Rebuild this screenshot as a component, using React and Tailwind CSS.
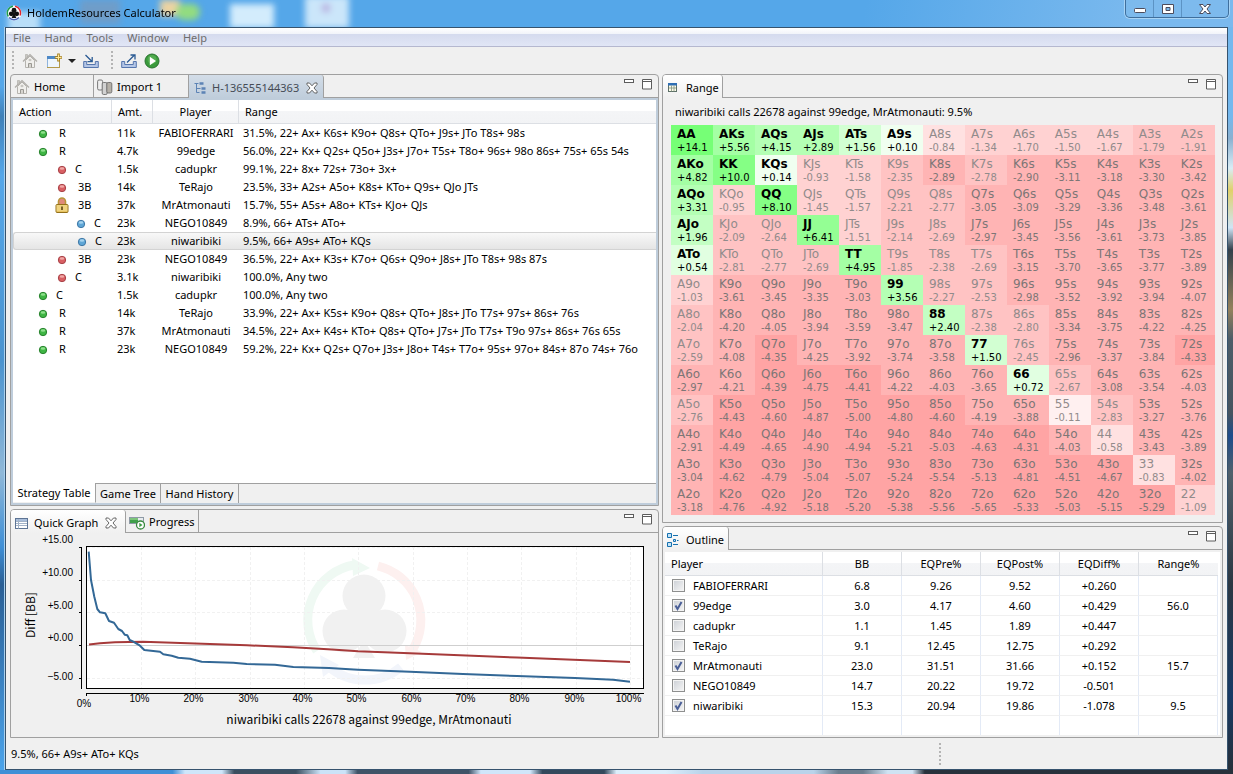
import { useState } from 'react'
import clsx from 'clsx'

const MENUS = ['File', 'Hand', 'Tools', 'Window', 'Help']

const ACTIONS = [
  { level: 1, action: 'R', amount: '11k', player: 'FABIOFERRARI', range: '31.5%, 22+ Ax+ K6s+ K9o+ Q8s+ QTo+ J9s+ JTo T8s+ 98s' },
  { level: 1, action: 'R', amount: '4.7k', player: '99edge', range: '56.0%, 22+ Kx+ Q2s+ Q5o+ J3s+ J7o+ T5s+ T8o+ 96s+ 98o 86s+ 75s+ 65s 54s' },
  { level: 2, action: 'C', amount: '1.5k', player: 'cadupkr', range: '99.1%, 22+ 8x+ 72s+ 73o+ 3x+' },
  { level: 2, action: '3B', amount: '14k', player: 'TeRajo', range: '23.5%, 33+ A2s+ A5o+ K8s+ KTo+ Q9s+ QJo JTs' },
  { level: 2, action: '3B', amount: '37k', player: 'MrAtmonauti', range: '15.7%, 55+ A5s+ A8o+ KTs+ KJo+ QJs', locked: true },
  { level: 3, action: 'C', amount: '23k', player: 'NEGO10849', range: '8.9%, 66+ ATs+ ATo+' },
  { level: 3, action: 'C', amount: '23k', player: 'niwaribiki', range: '9.5%, 66+ A9s+ ATo+ KQs' },
  { level: 2, action: '3B', amount: '23k', player: 'NEGO10849', range: '36.5%, 22+ Ax+ K3s+ K7o+ Q6s+ Q9o+ J8s+ JTo T8s+ 98s 87s' },
  { level: 2, action: 'C', amount: '3.1k', player: 'niwaribiki', range: '100.0%, Any two' },
  { level: 1, action: 'C', amount: '1.5k', player: 'cadupkr', range: '100.0%, Any two' },
  { level: 1, action: 'R', amount: '14k', player: 'TeRajo', range: '33.9%, 22+ Ax+ K5s+ K9o+ Q8s+ QTo+ J8s+ JTo T7s+ 97s+ 86s+ 76s' },
  { level: 1, action: 'R', amount: '37k', player: 'MrAtmonauti', range: '34.5%, 22+ Ax+ K4s+ KTo+ Q8s+ QTo+ J7s+ JTo T7s+ T9o 97s+ 86s+ 76s 65s' },
  { level: 1, action: 'R', amount: '23k', player: 'NEGO10849', range: '59.2%, 22+ Kx+ Q2s+ Q7o+ J3s+ J8o+ T4s+ T7o+ 95s+ 97o+ 84s+ 87o 74s+ 76o' },
]

const RANKS = 'AKQJT98765432'

const EV = [
  '+14.1 +5.56 +4.15 +2.89 +1.56 +0.10 -0.84 -1.34 -1.70 -1.50 -1.67 -1.79 -1.91',
  '+4.82 +10.0 +0.14 -0.93 -1.58 -2.35 -2.89 -2.78 -2.90 -3.11 -3.18 -3.30 -3.42',
  '+3.31 -0.95 +8.10 -1.45 -1.57 -2.21 -2.77 -3.05 -3.09 -3.29 -3.36 -3.48 -3.61',
  '+1.96 -2.09 -2.64 +6.41 -1.51 -2.14 -2.69 -2.97 -3.45 -3.56 -3.61 -3.73 -3.85',
  '+0.54 -2.81 -2.77 -2.69 +4.95 -1.85 -2.38 -2.69 -3.15 -3.70 -3.65 -3.77 -3.89',
  '-1.03 -3.61 -3.45 -3.35 -3.03 +3.56 -2.27 -2.53 -2.98 -3.52 -3.92 -3.94 -4.07',
  '-2.04 -4.20 -4.05 -3.94 -3.59 -3.47 +2.40 -2.38 -2.80 -3.34 -3.75 -4.22 -4.25',
  '-2.59 -4.08 -4.35 -4.25 -3.92 -3.74 -3.58 +1.50 -2.45 -2.96 -3.37 -3.84 -4.33',
  '-2.97 -4.21 -4.39 -4.75 -4.41 -4.22 -4.03 -3.65 +0.72 -2.67 -3.08 -3.54 -4.03',
  '-2.76 -4.43 -4.60 -4.87 -5.00 -4.80 -4.60 -4.19 -3.88 -0.11 -2.83 -3.27 -3.76',
  '-2.91 -4.49 -4.65 -4.90 -4.94 -5.21 -5.03 -4.63 -4.31 -4.03 -0.58 -3.43 -3.89',
  '-3.04 -4.62 -4.79 -5.04 -5.07 -5.24 -5.54 -5.13 -4.81 -4.51 -4.67 -0.83 -4.02',
  '-3.18 -4.76 -4.92 -5.18 -5.20 -5.38 -5.56 -5.65 -5.33 -5.03 -5.15 -5.29 -1.09',
].map((row) => row.split(' '))

const STEPS = [0.25, 0.9, 1.75, 2.85, 4.3, 6, 8, 12]
const GREENS = ['bg-[#f0fff0]', 'bg-[#e1ffe1]', 'bg-[#d2ffd2]', 'bg-[#c3ffc3]', 'bg-[#b4ffb4]', 'bg-[#a4ffa4]', 'bg-[#94ff94]', 'bg-[#85ff85]', 'bg-[#76ff76]']
const REDS = ['bg-[#fff0f0]', 'bg-[#ffe1e1]', 'bg-[#ffd2d2]', 'bg-[#ffc3c3]', 'bg-[#ffb4b4]', 'bg-[#ffa4a4]']

const SEATS = [
  { name: 'FABIOFERRARI', bb: '6.8', pre: '9.26', post: '9.52', diff: '+0.260', range: '' },
  { name: '99edge', bb: '3.0', pre: '4.17', post: '4.60', diff: '+0.429', range: '56.0' },
  { name: 'cadupkr', bb: '1.1', pre: '1.45', post: '1.89', diff: '+0.447', range: '' },
  { name: 'TeRajo', bb: '9.1', pre: '12.45', post: '12.75', diff: '+0.292', range: '' },
  { name: 'MrAtmonauti', bb: '23.0', pre: '31.51', post: '31.66', diff: '+0.152', range: '15.7' },
  { name: 'NEGO10849', bb: '14.7', pre: '20.22', post: '19.72', diff: '-0.501', range: '' },
  { name: 'niwaribiki', bb: '15.3', pre: '20.94', post: '19.86', diff: '-1.078', range: '9.5' },
]

function AppIcon() {
  return (
    <svg viewBox="0 0 16 16" className="size-4 shrink-0">
      <circle cx="8" cy="8" r="7.6" fill="#fff" />
      <g fill="none" strokeWidth="1.5">
        <path d="M2.3 11.5A6.8 6.8 0 0 1 7 1.3" stroke="#1f9d4c" />
        <path d="M9 1.3a6.8 6.8 0 0 1 5 9.2" stroke="#e0242b" />
        <path d="M13 12.6a6.8 6.8 0 0 1-10 0" stroke="#4a62b5" />
      </g>
      <g fill="#111">
        <circle cx="8" cy="5.2" r="2.4" />
        <circle cx="5.3" cy="8.8" r="2.4" />
        <circle cx="10.7" cy="8.8" r="2.4" />
        <path d="M7.2 7h1.6l.3 3 1.3 3H5.6l1.3-3z" />
      </g>
    </svg>
  )
}

function HomeIcon() {
  return (
    <svg viewBox="0 0 16 16" className="size-4 shrink-0">
      <path d="M3.5 7.5v7h9v-7L8 3z" fill="#f0efec" stroke="#b5b3ae" />
      <path d="M1 8.5 8 1.6l7 6.9" fill="none" stroke="#b0aea9" strokeWidth="1.3" />
      <path d="M3.500 1.500h2v2.500l-2 2z" fill="#c9c7c2" stroke="#a9a7a2" strokeWidth=".6" />
      <path d="M6.5 14.5v-4h3v4" fill="#d6d4cf" stroke="#9a9893" />
      <path d="M6.5 7h3M8 5.8v2.4" stroke="#b0aea9" strokeWidth=".8" />
    </svg>
  )
}

function NewIcon() {
  return (
    <svg viewBox="0 0 16 16" className="size-4">
      <rect x="1.5" y="3.5" width="12" height="11" fill="#eef6fd" stroke="#b39a4c" />
      <path d="M1 3h10v3H1z" fill="#4d88c6" />
      <path d="M1.5 14V6" stroke="#8fb4dc" />
      <path d="M12.5.5v8M8.8 4.5h7.4" stroke="#a47d1a" strokeWidth="2.6" />
      <path d="M12.5 1.4v6.2M9.5 4.5h6" stroke="#ffe89a" strokeWidth="1.1" />
    </svg>
  )
}

function TrayIcon({ out }) {
  return (
    <svg viewBox="0 0 16 16" className="size-4">
      <path d="M.7 8.5h3v3h8.6v-3h3v6H.7z" fill="#b4c6e6" stroke="#5676ad" />
      {out ? (
        <path d="m6 9.5 7-7M9.5 2H14v4.5" fill="none" stroke="#2b5b94" strokeWidth="1.3" />
      ) : (
        <path d="m2.5 2 6 6M4.5 8.7h4.7V4" fill="none" stroke="#2b5b94" strokeWidth="1.3" />
      )}
    </svg>
  )
}

function RunIcon() {
  return (
    <svg viewBox="0 0 16 16" className="size-4">
      <circle cx="8" cy="8" r="7" fill="#3a9a3c" stroke="#2a7430" />
      <circle cx="8" cy="6.5" r="4.5" fill="#62b95b" opacity=".6" />
      <path d="M5.8 3.8v8.4L12 8z" fill="#fff" />
    </svg>
  )
}

function ImportIcon() {
  return (
    <svg viewBox="0 0 16 16" className="size-4 shrink-0" stroke="#6b6b6b" strokeWidth=".9">
      <rect x=".6" y="1" width="5" height="10" rx="1.4" fill="#eee" />
      <rect x="5.2" y="3.5" width="5" height="12" rx="1.4" fill="#d2d2d2" />
      <rect x="9.8" y="3.5" width="5" height="10.5" rx="1.4" fill="#b5b0a8" />
    </svg>
  )
}

function TreeIcon() {
  return (
    <svg viewBox="0 0 16 16" className="size-4 shrink-0" fill="none" stroke="#5c83b5">
      <path d="M2.500 3.500h4M4.500 3.500v9h3M4.500 8.500h4" />
      <path d="M7.500 3.500h4M9.500 8.500h4M9.500 12.500h4" strokeWidth="2.500" />
    </svg>
  )
}

function TableIcon({ wide }) {
  return (
    <svg viewBox="0 0 16 16" className="size-4 shrink-0">
      {wide ? (
        <>
          <rect x="1.500" y="3.500" width="12" height="10" fill="#fff" stroke="#5d7494" />
          <path d="M2 4h11v2H2z" fill="#a9bedb" />
          <path d="M2 6.500h11M2 8.500h11M2 10.500h11M4.500 4v9.500" stroke="#a3b3c8" />
        </>
      ) : (
        <>
          <rect x="2.500" y="3.500" width="8" height="8" fill="#fdfbe9" stroke="#5d7068" />
          <path d="M2 3h9v2.500H2z" fill="#2f6fb5" />
          <path d="M3 8h7M5.500 5.500v6M8 5.500v6" stroke="#7f937f" strokeWidth=".8" />
        </>
      )}
    </svg>
  )
}

function ProgressIcon() {
  return (
    <svg viewBox="0 0 16 16" className="size-4 shrink-0">
      <rect x=".5" y="3.500" width="14" height="6" fill="#e8ecef" stroke="#8e9aa5" />
      <path d="M1 4h8v5H1z" fill="#3fa04a" />
      <path d="M1 4h8v2H1z" fill="#7cc57b" />
      <circle cx="11.500" cy="11" r="4" fill="#fff" stroke="#37893d" strokeWidth="1.300" />
      <path d="M10.300 8.800v4.400l3.200-2.200z" fill="#3b9a41" />
    </svg>
  )
}

function OutlineIcon() {
  return (
    <svg viewBox="0 0 16 16" className="size-4 shrink-0" stroke="#1571b0" fill="#c5e4f8">
      <path d="M1.500 1.500h4v4h-4zM1.500 10.500h4v4h-4zM7.500 7.500h2v2h-2z" />
      <path d="M7 3.500h5M11 8.500h1.500M7 12.500h5" />
    </svg>
  )
}

function CloseIcon() {
  return (
    <svg viewBox="0 0 12 12" className="size-3" fill="#fff" stroke="#555" strokeWidth=".9">
      <path d="M1 1h2.500L6 3.800 8.500 1H11v1.500L8 6l3 3.500V11H8.500L6 8.200 3.500 11H1V9.500L4 6 1 2.500z" />
    </svg>
  )
}

function LockIcon() {
  return (
    <svg viewBox="0 0 16 16" className="size-4">
      <path d="M4.500 8V4.500a3.500 3.500 0 0 1 7 0V8" fill="#e08a7a" stroke="#b8953a" strokeWidth="1.600" />
      <rect x="2" y="7.500" width="12" height="8" rx="1" fill="#e8c462" stroke="#94711b" />
      <path d="M2.500 9h11M2.500 11h11M2.500 13h11" stroke="#f8e6a6" strokeWidth=".9" />
      <path d="M8 9.500v3.500" stroke="#5b4514" strokeWidth="1.600" />
    </svg>
  )
}

const DOTS = {
  1: { fill: '#3fb544', shine: '#8fe08c', stroke: '#1f7a25' },
  2: { fill: '#d85f63', shine: '#f0a9a7', stroke: '#a03a40' },
  3: { fill: '#5fa6d6', shine: '#a5d3ee', stroke: '#38709f' },
}

function LevelDot({ level }) {
  const c = DOTS[level]
  return (
    <svg viewBox="0 0 16 16" className="size-4">
      <circle cx="8" cy="9" r="3.700" fill={c.fill} stroke={c.stroke} strokeWidth=".9" />
      <ellipse cx="8" cy="7.500" rx="2.300" ry="1.300" fill={c.shine} />
    </svg>
  )
}

function ViewButtons() {
  return (
    <div className="ml-auto flex items-start gap-2 pt-1 pr-[6px]">
      <button aria-label="Minimize view" className="h-[11px] w-[10px]">
        <svg viewBox="0 0 10 11" className="h-[11px] w-[10px]">
          <rect x=".5" y=".5" width="9" height="3" fill="#fff" stroke="#5c5c5c" />
        </svg>
      </button>
      <button aria-label="Maximize view" className="h-[11px] w-[10px]">
        <svg viewBox="0 0 10 11" className="h-[11px] w-[10px]">
          <path d="M.5.500h9v9.500H.5zM.5 2.500h9" fill="#fff" stroke="#5c5c5c" />
        </svg>
      </button>
    </div>
  )
}

function Tab({ icon, active, closable, className, children }) {
  return (
    <div
      className={clsx(
        'flex h-[23px] shrink-0 items-center gap-1 border-r border-[#a0a0a0] pt-[2px] pl-[3px]',
        active ? 'rounded-tr-[3px]' : 'border-b',
        className,
      )}
    >
      <button className="flex items-center gap-1 whitespace-nowrap">
        {icon}
        {children}
      </button>
      {closable && (
        <button aria-label="Close tab" className="ml-[3px]">
          <CloseIcon />
        </button>
      )}
    </div>
  )
}

// the rule under the tab row runs on past the last tab
function TabRow({ children }) {
  return (
    <div className="flex h-[23px] shrink-0">
      {children}
      <div className="flex flex-1 border-b border-[#a0a0a0]">
        <ViewButtons />
      </div>
    </div>
  )
}

function Panel({ className, children }) {
  return (
    <section className={clsx('flex flex-col overflow-hidden rounded-t-[4px] border border-[#a0a0a0] bg-[#f0f0f0]', className)}>
      {children}
    </section>
  )
}

function Grip({ className }) {
  return <span className={clsx('w-[2px] bg-[repeating-linear-gradient(#b4b4b4_0_2px,transparent_2px_4px)]', className)} />
}

function TitleBar() {
  return (
    <header className="relative flex h-[27px] items-start overflow-hidden bg-[linear-gradient(100deg,#55a7e9_70%,#7ab9ee_92%)] pl-[6px]">
      <div className="absolute inset-0 blur-[3px]" aria-hidden="true">
        <span className="absolute top-3 left-2 h-6 w-8 bg-[#b9def8]" />
        <span className="absolute top-0 left-20 h-6 w-10 bg-[#6f9dc9]" />
        <span className="absolute top-0 left-40 h-4 w-5 bg-[#ecd3a2]" />
        <span className="absolute top-1 left-[176px] h-4 w-6 rounded-full bg-[#93dc80]" />
        <span className="absolute top-1 left-[230px] h-6 w-11 bg-[#d3ecfc]" />
        <span className="absolute -top-1 left-[305px] h-8 w-11 bg-[#cbe6fa]" />
        <span className="absolute top-1 left-[322px] h-2 w-2 bg-[#b9b3e0]" />
      </div>
      <div className="relative flex items-center gap-[5px] pt-1">
        <AppIcon />
        <h1 className="leading-[18px]">HoldemResources Calculator</h1>
      </div>
      <div className="relative mr-[4px] ml-auto flex h-[18px] rounded-b-[5px] border border-t-0 border-[#3f6f9d] bg-[#7fbcec]/50 shadow-[0_0_0_1px_#a9d4f5]">
        <button aria-label="Minimize" className="flex w-[28px] items-center justify-center border-r border-[#5c93c4]">
          <svg viewBox="0 0 12 5" className="mt-1 h-[5px] w-3">
            <rect x=".5" y=".5" width="11" height="4" rx="1" fill="#fff" stroke="#4c4c5c" />
          </svg>
        </button>
        <button aria-label="Maximize" className="flex w-[28px] items-center justify-center border-r border-[#5c93c4]">
          <svg viewBox="0 0 12 10" className="h-[10px] w-3">
            <path d="M.5.500h11v9H.5zM4 3.500v3h4v-3z" fill="#fff" fillRule="evenodd" stroke="#4c4c5c" />
          </svg>
        </button>
        <button aria-label="Close" className="flex w-[46px] items-center justify-center">
          <svg viewBox="0 0 12 10" className="h-[10px] w-3">
            <path d="M.5.500h3.500l2 2.500L8 .5h3.500L8 5l3.500 4.500H8L6 7 4 9.500H.5L4 5z" fill="#fff" stroke="#4c4c5c" />
          </svg>
        </button>
      </div>
    </header>
  )
}

function MenuBar() {
  return (
    <nav className="flex h-[19px] items-center border-b border-[#b5b8cf] bg-[linear-gradient(#ffffff,#f0f3f9_35%,#d5dbee_36%,#e1e6f6)] pt-[2px] text-[#6d6d6d]">
      {MENUS.map((menu) => (
        <button key={menu} className="px-[7px]">
          {menu}
        </button>
      ))}
    </nav>
  )
}

function Toolbar() {
  return (
    <div className="flex h-[27px] items-center pl-[6px]">
      <Grip className="h-5" />
      <button aria-label="Home" className="ml-2"><HomeIcon /></button>
      <button aria-label="New" className="ml-2"><NewIcon /></button>
      <button aria-label="New menu" className="ml-[6px]">
        <svg viewBox="0 0 8 4" className="h-1 w-2"><path d="M0 0h8L4 4z" fill="#222" /></svg>
      </button>
      <button aria-label="Import" className="ml-[7px]"><TrayIcon /></button>
      <Grip className="ml-3 h-5" />
      <button aria-label="Export" className="ml-2"><TrayIcon out /></button>
      <button aria-label="Run" className="ml-[7px]"><RunIcon /></button>
    </div>
  )
}

const HEAD = 'h-6 border-r border-b border-[#dcdfe4] font-normal last:border-r-0'
const HEAD_ROW = 'bg-[linear-gradient(#ffffff_45%,#f4f5f7_46%,#f2f3f5)]'
const INDENT = { 1: 'pl-[22px]', 2: 'pl-[41px]', 3: 'pl-[60px]' }

function StrategyTable() {
  const [selected, setSelected] = useState(6)

  return (
    <table className="w-full table-fixed border-separate border-spacing-0">
      <colgroup>
        <col className="w-[99px]" />
        <col className="w-[41px]" />
        <col className="w-[86px]" />
        <col />
      </colgroup>
      <thead>
        <tr className={HEAD_ROW}>
          <th className={clsx(HEAD, 'pl-[6px] text-left')}>Action</th>
          <th className={clsx(HEAD, 'pl-[6px] text-left')}>Amt.</th>
          <th className={clsx(HEAD, 'text-center')}>Player</th>
          <th className={clsx(HEAD, 'pl-[6px] text-left')}>Range</th>
        </tr>
      </thead>
      <tbody>
        {ACTIONS.map((row, i) => {
          const cell = clsx(
            'h-[18px] overflow-hidden border-y whitespace-nowrap',
            i === selected ? 'border-[#d3d3d3] bg-[linear-gradient(#f8f8f8,#e5e5e5)]' : 'border-transparent',
          )
          return (
            <tr key={i} onClick={() => setSelected(i)}>
              <td className={clsx(cell, INDENT[row.level], i === selected && 'rounded-l-[3px] border-l')}>
                <span className={clsx('flex h-4 items-center', row.action === 'C' ? 'gap-[5px]' : 'gap-2')}>
                  {row.locked ? <LockIcon /> : <LevelDot level={row.level} />}
                  {row.action}
                </span>
              </td>
              <td className={clsx(cell, 'pl-[5px]')}>{row.amount}</td>
              <td className={clsx(cell, 'text-center')}>{row.player}</td>
              <td className={clsx(cell, 'pl-1')}>{row.range}</td>
            </tr>
          )
        })}
      </tbody>
    </table>
  )
}

function EditorPanel() {
  return (
    <Panel className="min-h-[300px] flex-1">
      <TabRow>
        <Tab icon={<HomeIcon />} className="w-[83px]">Home</Tab>
        <Tab icon={<ImportIcon />} className="w-[95px]">Import 1</Tab>
        <Tab icon={<TreeIcon />} active closable className="w-[135px] bg-[linear-gradient(#d3dde8,#bfcddb)] text-[#454b55]">
          H-136555144363
        </Tab>
      </TabRow>
      <div className="flex flex-1 flex-col border-2 border-[#bfcddb]">
        <div className="flex-1 bg-white">
          <StrategyTable />
        </div>
        <div className="flex h-5 leading-[18px]">
          <button className="w-[83px] border-r border-b border-[#a0a0a0] border-b-[#f0f0f0] bg-white whitespace-nowrap">Strategy Table</button>
          <button className="w-[65px] border-t border-r border-[#a0a0a0] whitespace-nowrap">Game Tree</button>
          <button className="w-[78px] border-t border-r border-[#a0a0a0] whitespace-nowrap">Hand History</button>
          <span className="flex-1 border-t border-[#a0a0a0]" />
        </div>
      </div>
    </Panel>
  )
}

const X_TICKS = [10, 20, 30, 40, 50, 60, 70, 80, 90, 100]
const Y_TICKS = [
  { label: '+15.00', y: 14, text: 10 },
  { label: '+10.00', y: 47, text: 43 },
  { label: '+5.00', y: 79, text: 76 },
  { label: '+0.00', y: 112, text: 108 },
  { label: '−5.00', y: 145, text: 147 },
]

const tickX = (pct) => Math.round(75.6 + pct * 5.434) + 0.5

function Watermark() {
  return (
    <g>
      <g fill="none" strokeWidth="9">
        <path d="M306 118A56 56 0 0 1 343 32" stroke="#eff9f3" />
        <path d="M367 33A56 56 0 0 1 402 116" stroke="#fdf0ef" />
        <path d="M390 134A56 56 0 0 1 318 134" stroke="#f2f5fb" />
      </g>
      <path d="m341 25 18 10-17 8z" fill="#eff9f3" />
      <path d="m394 112 17 7-16 8z" fill="#fdf0ef" />
      <path d="m309 122 3 22 16-12z" fill="#f2f5fb" />
      <g fill="#f1f1f1">
        <circle cx="353" cy="63" r="21.500" />
        <circle cx="333" cy="98" r="21.500" />
        <circle cx="374" cy="98" r="21.500" />
        <path d="M344 76h19l4 18-8 18h-11l-8-18z" />
        <path d="m353 107 11 18h-22z" />
      </g>
    </g>
  )
}

function QuickGraph() {
  return (
    <svg viewBox="0 0 647 204" className="block w-full font-['Liberation_Sans']" role="img" aria-label="Diff in BB by range">
      <rect x="75.500" y="13.500" width="557" height="142" fill="#fff" />
      <Watermark />
      <g stroke="#f1f1f1" strokeDasharray="3 2">
        {X_TICKS.map((t) => (
          <path key={t} d={`M${tickX(t)} 14V155`} />
        ))}
        <path d="M76 14.500h557M76 47.500h557M76 79.500h557M76 145.500h557" />
      </g>
      <path d="M76 112.500h557" stroke="#cfcfcf" />
      <g fill="none" strokeWidth="2" strokeLinejoin="round">
        <path
          d="M78 111.500 89 110.300 104 109.200 132 108.800 162 109.700 236 112.300 282 114.300 317 116.300 347 118.300 399 120.300 506 124.500 619 129"
          stroke="#a63a3a"
        />
        <path
          d="M77.700 18.700 80 47 83.300 63.700 86.300 76 89 79.300 94.300 80.300 98 88 103 89.700 107.300 96 111 98 113.700 101.700 116.300 102.300 118.700 107 122.300 108.700 129 112.700 133.300 117 149 118.700 152.300 121.300 160.700 122.700 167.300 124.700 179 125.700 190.700 128.700 222.300 129.700 235.700 131 264 131.700 282.300 134 318 135 347 136.700 399 138.700 452 141 506 143 564 145 602 146.700 619 148.700"
          stroke="#336896"
        />
      </g>
      <rect x="75.500" y="13.500" width="557" height="142" fill="none" stroke="#000" />
      <path d="M70.500 14v142M75 160.500h558M75.500 160v3" fill="none" stroke="#000" />
      {Y_TICKS.map((t) => (
        <g key={t.label}>
          <path d={`M68 ${t.y + 0.5}h3`} stroke="#000" />
          <text x="62" y={t.text} textAnchor="end" className="text-[10px]">{t.label}</text>
        </g>
      ))}
      <text x="73" y="174" textAnchor="middle" className="text-[10px]">0%</text>
      {X_TICKS.map((t) => (
        <text key={t} x={tickX(t) - 2} y="169" textAnchor="middle" className="text-[10px]">{t}%</text>
      ))}
      <text transform="translate(24 82) rotate(-90)" textAnchor="middle" className="font-['Noto_Sans_CJK_JP'] text-[12px]">
        Diff [BB]
      </text>
      <text x="358" y="191" textAnchor="middle" className="font-['Noto_Sans_CJK_JP'] text-[12px]">
        niwaribiki calls 22678 against 99edge, MrAtmonauti
      </text>
    </svg>
  )
}

function GraphPanel() {
  return (
    <Panel>
      <TabRow>
        <Tab icon={<TableIcon wide />} active closable className="w-[115px] bg-[linear-gradient(#ffffff,#f0f0f0)]">Quick Graph</Tab>
        <Tab icon={<ProgressIcon />} className="w-[73px]">Progress</Tab>
      </TabRow>
      <QuickGraph />
    </Panel>
  )
}

function handName(row, col) {
  if (row === col) return RANKS[row] + RANKS[row]
  return row < col ? `${RANKS[row]}${RANKS[col]}s` : `${RANKS[col]}${RANKS[row]}o`
}

function HandCell({ name, ev }) {
  const value = Number(ev)
  const step = STEPS.filter((s) => Math.abs(value) >= s).length
  const positive = value > 0
  return (
    <td
      className={clsx(
        'h-[30px] pl-[6px] align-top',
        positive ? GREENS[step] : REDS[Math.min(step, 5)],
        positive ? 'text-black' : step < 4 ? 'text-[#918b8b]' : 'text-[#7d7676]',
      )}
    >
      <div className={clsx('pt-[2px] text-[12px] leading-[15px]', positive && 'font-bold')}>{name}</div>
      <div className="text-[10px] leading-[12px]">{ev}</div>
    </td>
  )
}

function RangePanel() {
  return (
    <Panel className="flex-1">
      <TabRow>
        <Tab icon={<TableIcon />} active className="w-[60px] bg-[linear-gradient(#ffffff,#f0f0f0)]">Range</Tab>
      </TabRow>
      <p className="pt-[6px] pb-[5px] pl-3">niwaribiki calls 22678 against 99edge, MrAtmonauti: 9.5%</p>
      <div className="pr-[7px] pb-[7px] pl-2">
        <table className="w-full table-fixed border-collapse font-['DejaVu_Sans',sans-serif]">
          <colgroup>
            <col span={12} className="w-[7.72%]" />
            <col />
          </colgroup>
          <tbody>
            {EV.map((row, r) => (
              <tr key={r}>
                {row.map((ev, c) => (
                  <HandCell key={c} name={handName(r, c)} ev={ev} />
                ))}
              </tr>
            ))}
          </tbody>
        </table>
      </div>
    </Panel>
  )
}

function OutlinePanel() {
  const [checked, setChecked] = useState({ '99edge': true, MrAtmonauti: true, niwaribiki: true })
  const toggle = (name) => setChecked((prev) => ({ ...prev, [name]: !prev[name] }))
  const cell = 'h-5 border-r border-b border-r-[#e3eaf6] border-b-[#f0f0f0] text-center'

  return (
    <Panel>
      <TabRow>
        <Tab icon={<OutlineIcon />} active className="w-[66px] bg-[linear-gradient(#ffffff,#f0f0f0)]">Outline</Tab>
      </TabRow>
      <div className="m-[2px] bg-white pr-[2px]">
        <table className="w-full table-fixed border-separate border-spacing-0">
          <colgroup>
            <col className="w-[158px]" />
            <col span={5} />
          </colgroup>
          <thead>
            <tr className={HEAD_ROW}>
              <th className={clsx(HEAD, 'pl-[6px] text-left')}>Player</th>
              <th className={HEAD}>BB</th>
              <th className={HEAD}>EQPre%</th>
              <th className={HEAD}>EQPost%</th>
              <th className={HEAD}>EQDiff%</th>
              <th className={HEAD}>Range%</th>
            </tr>
          </thead>
          <tbody>
            {SEATS.map((seat) => (
              <tr key={seat.name}>
                <td className={clsx(cell, 'pl-[7px]')}>
                  <label className="flex items-center gap-2">
                    <span className="relative size-[13px]">
                      <input
                        type="checkbox"
                        checked={!!checked[seat.name]}
                        onChange={() => toggle(seat.name)}
                        className="peer block size-[13px] appearance-none border border-[#8e8f8f] bg-[linear-gradient(135deg,#cbcfd5,#f6f6f6)] shadow-[inset_0_0_0_1px_#f4f4f4]"
                      />
                      <svg viewBox="0 0 13 13" className="pointer-events-none absolute inset-0 hidden peer-checked:block">
                        <path d="m3.500 6.500 2 3.500 4-7" fill="none" stroke="#4a5f97" strokeWidth="2" />
                      </svg>
                    </span>
                    {seat.name}
                  </label>
                </td>
                <td className={cell}>{seat.bb}</td>
                <td className={cell}>{seat.pre}</td>
                <td className={cell}>{seat.post}</td>
                <td className={cell}>{seat.diff}</td>
                <td className={cell}>{seat.range}</td>
              </tr>
            ))}
            <tr>
              {[0, 1, 2, 3, 4, 5].map((i) => (
                <td key={i} className="h-[19px] border-r border-[#e3eaf6]" />
              ))}
            </tr>
          </tbody>
        </table>
      </div>
    </Panel>
  )
}

export default function App() {
  return (
    <div className="flex min-h-screen flex-col overflow-hidden bg-[#55a7e9] font-['Noto_Sans',sans-serif] text-[11px] leading-[16px] text-black">
      <TitleBar />
      <div className="flex flex-1">
        <div className="w-[5px] bg-[linear-gradient(#55a7e9_8%,#3f80b8_12%,#55a7e9_20%,#4a93cf_45%,#8fb8d8_60%,#3f8fd6_70%,#2a5f95_75%,#4ba3ea)]" />
        <main className="flex min-w-0 flex-1 flex-col border border-[#36536e] bg-[#f0f0f0] shadow-[0_0_0_1px_#a9d0ee]">
          <MenuBar />
          <Toolbar />
          <div className="grid flex-1 grid-cols-[649fr_561fr] gap-[3px] px-1">
            <div className="flex min-w-0 flex-col gap-[3px]">
              <EditorPanel />
              <GraphPanel />
            </div>
            <div className="flex min-w-0 flex-col gap-[3px]">
              <RangePanel />
              <OutlinePanel />
            </div>
          </div>
          <footer className="grid h-[31px] grid-cols-[929fr_284fr] items-center px-1">
            <span className="pl-[1px]">9.5%, 66+ A9s+ ATo+ KQs</span>
            <Grip className="h-[22px]" />
          </footer>
        </main>
        <div className="w-[5px] bg-[linear-gradient(#74b8ee_12%,#8ab0d0_15%,#d9ecf5_19%,#e0d06a_22%,#cfe4f5_27%,#33404b_30%,#94815c_38%,#4d5d69_42%,#46545f_52%,#1d4c8c_55%,#50606b_60%,#2b3742_75%,#173a66_90%,#26303a)]" />
      </div>
      <div className="h-[4px] bg-[linear-gradient(90deg,#3f8fd6_0_14%,#cfe6fa_15%_18%,#3b4f60_19%_24%,#cbe3f8_26%_28%,#3f5367_29%_38%,#d0e6fa_39%_43%,#33495c_44%_49%,#dceefb_50%_54%,#b9d3ea_57%_66%,#6b7e8e_68%_70%,#cfe3f3_72%_74%,#28323c_75%)]" />
    </div>
  )
}
